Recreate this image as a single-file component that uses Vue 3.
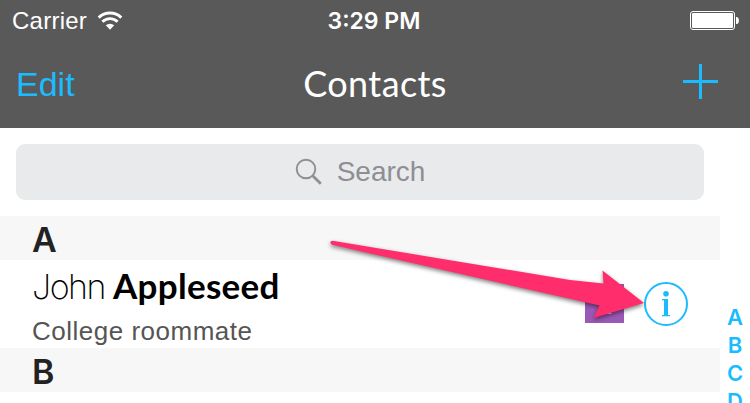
<script setup>
const indexLetters = ['A', 'B', 'C', 'D']
</script>

<template>
  <div class="screen">
    <header>
      <div class="status">
        <div class="carrier">
          <span class="carrier-name">Carrier</span>
          <svg class="wifi" width="26" height="20" viewBox="0 0 26 20">
            <path d="M1.7 6.6A16.2 16.2 0 0 1 24.3 6.6M5.4 10.8A10.8 10.8 0 0 1 20.6 10.8" fill="none" stroke="#fff" stroke-width="2.9" />
            <path d="M8.8 14.2A6.4 6.4 0 0 1 17.2 14.2L13 18.8Z" fill="#fff" />
          </svg>
        </div>
        <span class="time">3:29 PM</span>
        <svg class="battery" width="50" height="20" viewBox="0 0 50 20">
          <rect x=".5" y=".5" width="44" height="18" rx="2.5" fill="none" stroke="#fff" />
          <rect x="2" y="2" width="41" height="15" rx="1.2" fill="#fff" />
          <path d="M46 6h1.2Q49 7 49 9.5T47.2 13H46Z" fill="#fff" />
        </svg>
      </div>
      <nav>
        <span class="edit">Edit</span>
        <h1>Contacts</h1>
        <svg class="add" width="35" height="35" viewBox="0 0 35 35">
          <path d="M17.5 0v35M0 17.5h35" stroke="#1bbcff" stroke-width="3" />
        </svg>
      </nav>
    </header>
    <main>
      <div class="list">
        <div class="search">
          <svg width="28" height="28" viewBox="0 0 28 28">
            <circle cx="11" cy="11" r="9.3" fill="none" stroke="#8e8e93" stroke-width="1.9" />
            <path d="M17.7 17.7L25.8 25.8" stroke="#8e8e93" stroke-width="2.7" />
          </svg>
          <span>Search</span>
        </div>
        <h2>A</h2>
        <div class="row">
          <div class="person">
            <div class="name"><span class="first">John</span><span class="last">Appleseed</span></div>
            <div class="note">College roommate</div>
          </div>
          <div class="badge">1</div>
          <div class="info">
            <svg width="44" height="44" viewBox="0 0 44 44">
              <circle cx="22" cy="22" r="21" fill="none" stroke="#1bbcff" stroke-width="2" />
              <circle cx="22" cy="11.7" r="2.8" fill="#1bbcff" />
              <path d="M18 17h6v16h2v1.3h-8V33h2V18.3h-2Z" fill="#1bbcff" />
            </svg>
          </div>
        </div>
        <h2>B</h2>
      </div>
      <aside><span v-for="letter in indexLetters" :key="letter">{{ letter }}</span></aside>
    </main>
    <svg class="arrow" width="330" height="70" viewBox="320 260 330 70">
      <path d="M332.5 240.8Q330 241 330.5 243Q331 244.8 333 245.1L599.5 305.5L593.5 318L644 303L602.5 270.5L603.5 283.5L570 280Z" fill="#ff2d6b" />
    </svg>
  </div>
</template>

<style>
body { margin: 0; background: #fff; }
</style>

<style scoped>
.screen { position: relative; width: 750px; height: 403px; overflow: hidden; background: #fff; font-family: "Liberation Sans", Arial, sans-serif; }
header { height: 128px; background: #595959; color: #fff; }
.status { display: grid; grid-template-columns: 1fr auto 1fr; grid-template-rows: 40px; align-items: center; height: 40px; padding: 0 12px; }
.carrier { display: flex; align-items: center; gap: 10px; padding-top: 1px; font-size: 24px; line-height: 40px; letter-spacing: .25px; }
.time { margin-right: 2px; padding-top: 1px; font-family: Inter, sans-serif; font-weight: 600; font-size: 23px; line-height: 40px; }
.battery { justify-self: end; margin: 2px -2px 0 0; }
nav { display: grid; grid-template-columns: 1fr auto 1fr; align-items: center; height: 88px; padding: 0 16px; }
.edit { color: #1bbcff; font-size: 34px; line-height: 88px; }
h1 { margin: 0; padding-bottom: 1px; font: 400 36px/87px Lato, sans-serif; letter-spacing: .4px; }
.add { justify-self: end; margin: 0 16px 6px 0; }
main { display: flex; height: 275px; }
.list { width: 720px; }
.search { display: flex; align-items: center; justify-content: center; gap: 14px; height: 56px; margin: 16px; border-radius: 9px; background: #e9eaec; color: #8e8e93; font-size: 28px; }
h2 { margin: 0; height: 44px; padding-left: 32px; background: #f7f7f7; color: #222; font: 600 34px/47px Inter, sans-serif; }
.row { display: flex; align-items: center; height: 88px; padding: 0 32px; }
.person { flex: 1; height: 88px; }
.name { display: flex; height: 56px; align-items: baseline; color: #000; }
.first { width: 81px; font: 200 34px/51px Inter, sans-serif; letter-spacing: -1.5px; }
.last { font: 700 35px/51px Lato, sans-serif; letter-spacing: .3px; }
.note { color: #555; font-size: 26px; line-height: 30px; letter-spacing: .5px; }
.badge { width: 39px; height: 39px; margin: 0 20px 1px 0; background: #9b59b6; color: #fff; font-size: 28px; line-height: 41px; text-align: center; }
.info { width: 44px; height: 44px; }
.info svg { display: block; }
aside { display: flex; flex-direction: column; width: 30px; padding-top: 175px; color: #1bbcff; font: 600 22px/28px Inter, sans-serif; text-align: center; }
.arrow { position: absolute; left: 320px; top: 260px; overflow: visible; filter: drop-shadow(0 2px 2px rgba(0, 0, 0, .5)); }
</style>
